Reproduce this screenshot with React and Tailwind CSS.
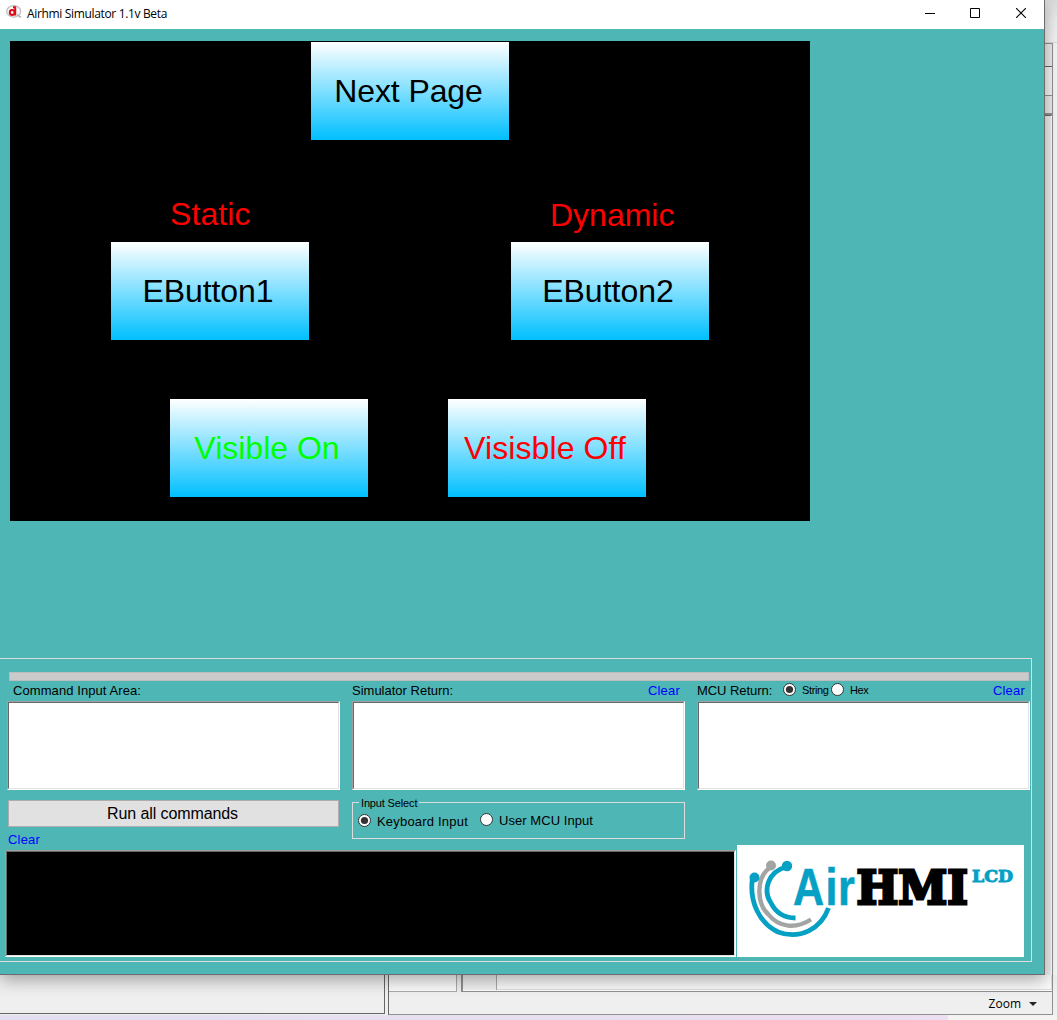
import React from "react";

const face = "bg-[linear-gradient(to_bottom,#ffffff,#00bfff)]";

function DeviceButton({ place, children }) {
  return (
    <button className={`absolute flex h-[98px] w-[198px] items-center justify-center text-[32px] leading-none whitespace-nowrap ${face} ${place}`}>
      {children}
    </button>
  );
}

function DeviceScreen() {
  return (
    <div className="relative mt-3 ml-[10px] h-[480px] w-[800px] shrink-0 bg-black">
      <DeviceButton place="left-[301px] top-px text-black">
        <span className="pr-[3px] tracking-[-0.1px]">Next Page</span>
      </DeviceButton>
      <span className="absolute left-[160px] top-[157px] text-[32px] leading-8 tracking-[0.1px] text-[#ff0000]">Static</span>
      <span className="absolute left-[540px] top-[158px] text-[32px] leading-8 text-[#ff0000]">Dynamic</span>
      <DeviceButton place="left-[101px] top-[201px] text-black">
        <span className="pr-[4px] tracking-[-0.1px]">EButton1</span>
      </DeviceButton>
      <DeviceButton place="left-[501px] top-[201px] text-black">
        <span className="pr-[4px]">EButton2</span>
      </DeviceButton>
      <DeviceButton place="left-[160px] top-[358px] text-[#00ff00]">
        <span className="pr-[4px]">Visible On</span>
      </DeviceButton>
      <DeviceButton place="left-[438px] top-[358px] text-[#ff0000]">
        <span className="pr-[4px] tracking-[0.1px]">Visisble Off</span>
      </DeviceButton>
    </div>
  );
}

function Radio({ checked }) {
  return (
    <svg width="13" height="13" viewBox="0 0 13 13" className="shrink-0">
      <circle cx="6.5" cy="6.5" r="6" fill="#fff" stroke="#333" />
      {checked && <circle cx="6.5" cy="6.5" r="3.6" fill="#333" />}
    </svg>
  );
}

function Sunken({ className }) {
  return (
    <div className={`border border-t-[#a0a0a0] border-l-[#a0a0a0] border-r-white border-b-white ${className}`}>
      <div className="h-full border border-t-[#696969] border-l-[#696969] border-r-[#e3e3e3] border-b-[#e3e3e3]" />
    </div>
  );
}

function TitleBar() {
  return (
    <header className="flex h-[29px] shrink-0 items-start bg-white">
      <svg width="18" height="18" viewBox="0 0 18 18" className="mt-[3px] ml-[5px]">
        <ellipse cx="8.7" cy="8.3" rx="7" ry="5.8" fill="#f5f5f5" stroke="#bdbdbd" strokeWidth="1.2" />
        <path d="M12 11.5 L15.8 14.4" stroke="#aaa" strokeWidth="1.5" />
        <circle cx="7.2" cy="9.5" r="2.4" fill="none" stroke="#e00b18" strokeWidth="2" />
        <path d="M8 4.2H10.2V12.5" fill="none" stroke="#e00b18" strokeWidth="2" />
      </svg>
      <h1 className="mt-[5px] ml-1 font-['Open_Sans','Noto_Sans',sans-serif] text-[12px] leading-[18px] tracking-[-0.34px] whitespace-nowrap">
        Airhmi Simulator 1.1v Beta
      </h1>
      <div className="mt-2 mr-[18px] ml-auto flex">
        <svg width="10" height="11" viewBox="0 0 10 11" className="mr-[35px]"><path d="M0 5.5H10" stroke="#000" shapeRendering="crispEdges" /></svg>
        <svg width="10" height="10" viewBox="0 0 10 10" className="mr-[36px]"><path d="M.5 .5h9v9h-9z" fill="none" stroke="#000" /></svg>
        <svg width="10" height="10" viewBox="0 0 10 10"><path d="M0 0L10 10M10 0L0 10" stroke="#000" strokeWidth="1.1" /></svg>
      </div>
    </header>
  );
}

function Logo() {
  return (
    <svg width="287" height="112" viewBox="0 0 287 112" className="bg-white">
      <g fill="none" stroke="#05a0c3" strokeWidth="4.8">
        <path d="M15.5 33C12 56 22 78 41 87C63 95 84 84 91.5 63" />
        <path d="M49 22C30 27 26 46 34 58C39 68 48 73 58.500 73" />
      </g>
      <path d="M34 22C18 32 20 59 31 69C42 83 59 84 74 74.500" fill="none" stroke="#a3a4a4" strokeWidth="4.4" />
      <circle cx="17.5" cy="32.5" r="5" fill="#05a0c3" />
      <circle cx="34" cy="20.500" r="5" fill="#a3a4a4" />
      <circle cx="50" cy="21" r="5.2" fill="#05a0c3" />
      <text x="0 39.5 55" transform="translate(56 59.5) scale(.82 1)" fontFamily="Liberation Sans, sans-serif" fontWeight="700" fontSize="52.5" fill="#05a0c3" stroke="#05a0c3" strokeWidth=".6">Air</text>
      <text x="119.5" y="58.5" textLength="111.5" lengthAdjust="spacingAndGlyphs" fontFamily="DejaVu Serif, serif" fontWeight="700" fontSize="47" fill="#000" stroke="#000" strokeWidth="3">HMI</text>
      <text x="235" y="36.5" textLength="41" lengthAdjust="spacingAndGlyphs" fontFamily="DejaVu Serif, serif" fontWeight="700" fontSize="17.5" fill="#05a0c3" stroke="#05a0c3" strokeWidth="1">LCD</text>
    </svg>
  );
}

function ControlPanel() {
  return (
    <section className="mt-[137px] flex h-[304px] w-[1032px] shrink-0 flex-col border border-l-0 border-[#dcdcdc] pr-px text-[13px] leading-4 whitespace-nowrap">
      <div className="mt-[13px] ml-[9px] h-[9px] w-[1020px] shrink-0 border border-[#bcbcbc] bg-[#cacaca]" />
      <div className="ml-[7px] grid h-5 shrink-0 grid-cols-[333px_333px_333px] gap-x-3 pt-[2px]">
        <label className="pl-[6px] tracking-[0.08px]">Command Input Area:</label>
        <div className="flex justify-between pr-[5px]">
          <label>Simulator Return:</label>
          <a className="tracking-[0.2px] text-[#0000ff]">Clear</a>
        </div>
        <div className="flex pr-[5px]">
          <label className="w-[86px] tracking-[-0.05px]">MCU Return:</label>
          <Radio checked />
          <span className="ml-[6px] w-[29px] text-[11px] leading-[15px] tracking-[-0.35px]">String</span>
          <Radio />
          <span className="ml-[6px] text-[11px] leading-[15px] tracking-[-0.4px]">Hex</span>
          <a className="ml-auto tracking-[0.2px] text-[#0000ff]">Clear</a>
        </div>
      </div>
      <div className="ml-[7px] grid h-[89px] shrink-0 grid-cols-[333px_333px_333px] gap-x-3">
        <Sunken className="bg-white" />
        <Sunken className="bg-white" />
        <Sunken className="bg-white" />
      </div>
      <div className="flex shrink-0">
        <div className="w-[352px] pl-2">
          <button className="mt-[10px] flex h-[27px] w-[331px] items-center justify-center border border-[#adadad] bg-[#e1e1e1] text-[16px] tracking-[-0.1px]">
            <span className="pr-[2px]">Run all commands</span>
          </button>
          <a className="mt-[5px] block tracking-[0.2px] text-[#0000ff]">Clear</a>
        </div>
        <div className="relative mt-3 flex h-[37px] w-[333px] border border-[#dcdcdc] pl-[5px]">
          <span className="absolute top-[-8px] left-[6px] bg-[#4eb6b4] px-[2px] text-[11px] leading-4 tracking-[-0.15px]">Input Select</span>
          <div className="mt-[11px] flex h-4 w-[122px]">
            <Radio checked />
            <span className="ml-[6px] leading-4 tracking-[0.2px]">Keyboard Input</span>
          </div>
          <div className="mt-[10px] flex h-4">
            <Radio />
            <span className="ml-[6px] leading-4 tracking-[0.05px]">User MCU Input</span>
          </div>
        </div>
      </div>
      <div className="mt-[-3px] flex items-start pl-[5px]">
        <Sunken className="mt-[5px] h-[107px] w-[731px] bg-black" />
        <div className="ml-px"><Logo /></div>
      </div>
    </section>
  );
}

function EditorBehind() {
  return (
    <div className="flex h-full flex-col bg-[#efefef]">
      <div className="flex h-[975px] shrink-0 justify-end">
        <div className="flex w-[12px] flex-col">
          <div className="h-[43px] shrink-0 border-b border-[#ddd] bg-gradient-to-b from-[#dadada] via-[#eeeeee] to-[#f3f3f3]" />
          <div className="flex flex-1">
            <div className="flex w-2 flex-col border-t border-r border-[#919191] bg-[#ececec]">
              <div className="h-[23px] border-b border-[#666]" />
              <div className="h-[29px] border-b border-[#929292] bg-[#f4f4f4]" />
              <div className="h-[19px] border-b-2 border-[#929292]" />
              <div className="flex-1 border-t border-[#666] border-r border-r-white bg-[#efefef]" />
            </div>
            <div className="flex-1 bg-[#f6f6f6]" />
          </div>
        </div>
      </div>
      <div className="flex h-10 shrink-0">
        <div className="mr-[3px] h-[39px] w-[385px] shrink-0 border-r border-b border-[#666] bg-[#efefef]" />
        <div className="flex w-[665px] flex-col border-r border-b border-l border-[#919191] border-l-[#666]">
          <div className="flex h-[17px]">
            <div className="w-[68px] border-r border-b border-[#aaa] bg-[#fafafa]" />
            <div className="ml-1 flex flex-1 border-b border-l-2 border-[#909090] bg-white">
              <div className="h-[15px] w-[34px] border-r border-[#aaa] bg-[#f0f0f0]" />
              <div className="h-[15px] flex-1 border-r border-b border-[#ddd] bg-[#fafafa]" />
            </div>
          </div>
          <div className="flex flex-1 items-center justify-end gap-[8px] pt-px pr-[15px] font-['Open_Sans','Noto_Sans',sans-serif] text-[12px] leading-none">
            <span>Zoom</span>
            <span className="h-0 w-0 border-x-4 border-t-4 border-x-transparent border-t-[#222]" />
          </div>
        </div>
      </div>
      <div className="flex flex-1 bg-[#f3f3f3]">
        <div className="w-[948px] bg-gradient-to-r from-[#e2dff0] to-[#ebdff0]" />
      </div>
    </div>
  );
}

export default function App() {
  return (
    <div className="relative h-[1020px] w-[1057px] overflow-hidden font-['Liberation_Sans',Arial,sans-serif] text-black">
      <EditorBehind />
      <main className="absolute top-0 left-0 flex h-[975px] w-[1045px] flex-col border-r border-b border-[#6c6c6c] bg-[#4eb6b4] shadow-[0_5px_16px_rgba(0,0,0,0.33)]">
        <TitleBar />
        <DeviceScreen />
        <ControlPanel />
      </main>
    </div>
  );
}
